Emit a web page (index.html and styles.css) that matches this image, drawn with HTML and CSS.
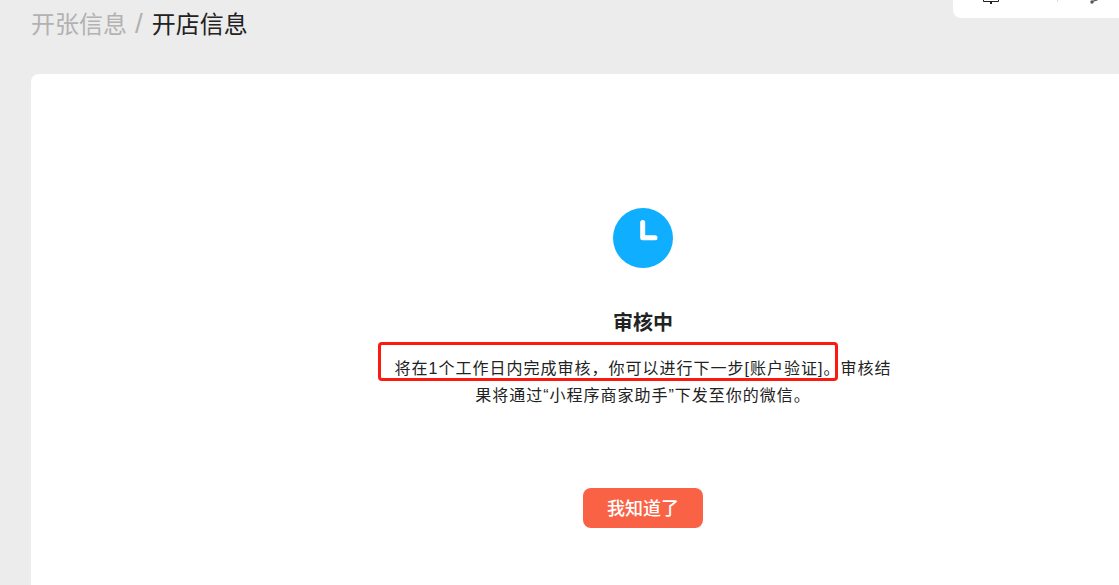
FILE: index.html
```html
<!DOCTYPE html>
<html lang="zh-CN">
<head>
    <meta charset="UTF-8">
    <meta name="viewport" content="width=device-width, initial-scale=1.0">
    <title>开店信息</title>
    <link rel="stylesheet" href="styles.css">
</head>
<body>
    <div class="page">
        <div class="toolbar">
            <svg class="tool-icon" width="16" height="4" viewBox="0 0 16 4">
                <path d="M.5 0v1.5h15V0" fill="none" stroke="#222" stroke-width="1"/>
                <path d="M7 1.5h2V4H7z" fill="#222"/>
            </svg>
            <span class="tool-divider"></span>
            <svg class="tool-icon" width="9" height="4" viewBox="0 0 9 4">
                <circle cx="2" cy="2" r="1.7" fill="#555"/>
                <path d="M3 1.2L7.5 0" fill="none" stroke="#555" stroke-width="1.2"/>
            </svg>
        </div>

        <h1 class="breadcrumb">
            <span class="crumb-muted">开张信息</span><span class="crumb-slash">/</span>开店信息
        </h1>

        <div class="card">
            <svg class="status-icon" width="60" height="60" viewBox="0 0 60 60">
                <circle cx="30" cy="30" r="30" fill="#10aeff"/>
                <path d="M29.7 14.5V29.7H42" fill="none" stroke="#fff" stroke-width="5" stroke-linecap="round" stroke-linejoin="round"/>
            </svg>
            <h2 class="status-title">审核中</h2>
            <p class="status-desc">将在1个工作日内完成审核，你可以进行下一步[账户验证]。审核结果将通过“小程序商家助手”下发至你的微信。</p>
            <button class="confirm-btn">我知道了</button>
        </div>

        <div class="annotation"></div>
    </div>
</body>
</html>
```

FILE: styles.css
```css
* {
    margin: 0;
    padding: 0;
    box-sizing: border-box;
    font-family: "Liberation Sans", "Noto Sans CJK SC", sans-serif;
}

html, body {
    height: 100%;
    overflow: hidden;
}

body {
    background-color: #ececec;
}

.page {
    position: relative;
    width: 1255px;
    height: 585px;
    overflow: hidden;
    padding: 7px 0 0 31px;
}

.toolbar {
    position: absolute;
    top: 0;
    left: 953px;
    width: 220px;
    height: 18px;
    background-color: #fff;
    border-radius: 0 0 8px 8px;
}

.tool-icon {
    position: absolute;
    top: 0;
    left: 30px;
}

.tool-icon:last-child {
    left: 137px;
}

.tool-divider {
    position: absolute;
    top: 0;
    left: 104px;
    width: 1px;
    height: 2px;
    background-color: #ddd;
}

.breadcrumb {
    height: 67px;
    font-size: 24px;
    font-weight: 400;
    line-height: 34px;
    color: #222;
}

.crumb-muted {
    color: #b2b2b2;
}

.crumb-slash {
    margin: 0 9px 0 8px;
    font-size: 28px;
    font-weight: 300;
    color: #b2b2b2;
}

.card {
    display: flex;
    flex-direction: column;
    align-items: center;
    height: 560px;
    padding-top: 134px;
    background-color: #fff;
    border-radius: 8px;
}

.status-title {
    margin-top: 41px;
    font-size: 20px;
    font-weight: 700;
    line-height: 28px;
    color: #222;
}

.status-desc {
    width: 500px;
    margin-top: 18px;
    font-size: 16px;
    line-height: 27px;
    letter-spacing: 1px;
    text-align: center;
    color: #222;
}

.confirm-btn {
    width: 120px;
    height: 40px;
    margin-top: 79px;
    padding-bottom: 2px;
    font-size: 18px;
    font-weight: 500;
    color: #fff;
    background-color: #fa6246;
    border: none;
    border-radius: 8px;
}

.annotation {
    position: absolute;
    top: 342px;
    left: 378px;
    width: 460px;
    height: 39px;
    border: 3px solid #fb1a10;
    border-radius: 4px;
}
```
